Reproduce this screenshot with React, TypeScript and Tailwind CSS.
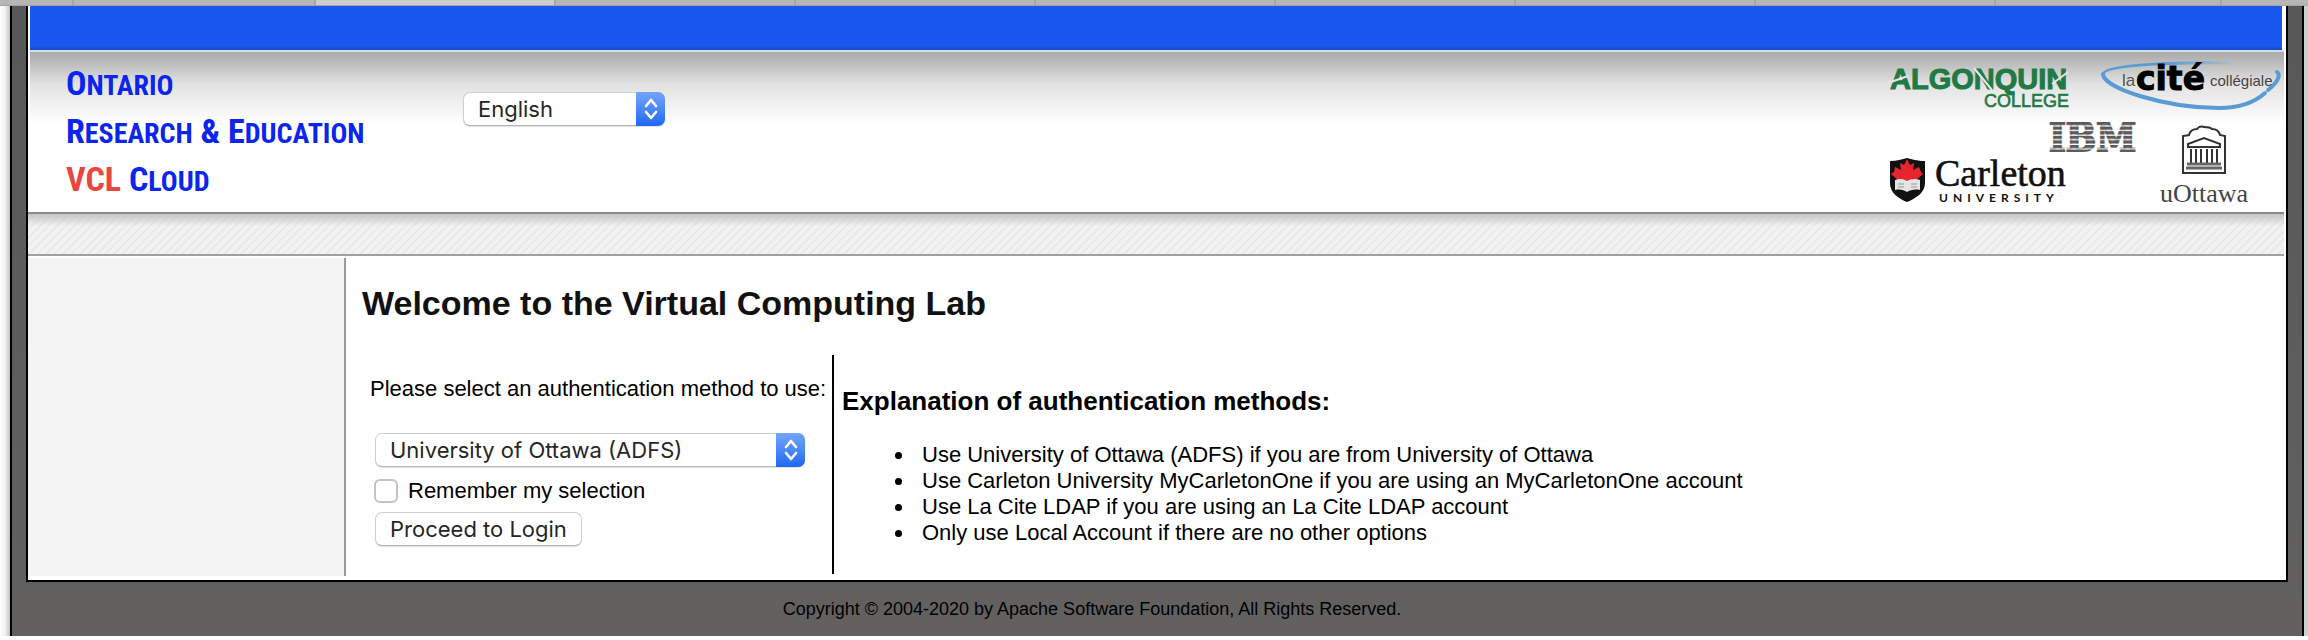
import React from "react";

const methods = [
    "Use University of Ottawa (ADFS) if you are from University of Ottawa",
    "Use Carleton University MyCarletonOne if you are using an MyCarletonOne account",
    "Use La Cite LDAP if you are using an La Cite LDAP account",
    "Only use Local Account if there are no other options",
];

const TabStrip: React.FC = () => (
    <div className="flex h-[6px] border-b border-[#a3a3a3] bg-[#b6b6b6]">
        <span className="flex-[73] border-r-2 border-[#a6a6a6]" />
        <span className="flex-[242] border-r-2 border-[#a6a6a6]" />
        <span className="flex-[240] border-r-2 border-[#a6a6a6] bg-[#cdcdcd]" />
        <span className="flex-[240] border-r-2 border-[#a6a6a6]" />
        <span className="flex-[240] border-r-2 border-[#a6a6a6]" />
        <span className="flex-[240] border-r-2 border-[#a6a6a6]" />
        <span className="flex-[240] border-r-2 border-[#a6a6a6]" />
        <span className="flex-[240] border-r-2 border-[#a6a6a6]" />
        <span className="flex-[240] border-r-2 border-[#a6a6a6]" />
        <span className="flex-[226] border-r-2 border-[#a6a6a6]" />
        <span className="flex-[87]" />
    </div>
);

type PickerProps = {
    id: string;
    label: string;
    options: string[];
    className: string;
};

const Picker: React.FC<PickerProps> = ({ id, label, options, className }) => (
    <div className={`relative ${className}`}>
        <select
            id={id}
            aria-label={label}
            className="block h-[34px] w-full appearance-none rounded-[7px] border border-[#cfcfcf] border-b-[#b4b4b4] bg-white pl-[14px] pr-9 font-[Inter,sans-serif] text-[22px] leading-[30px] text-[#262626] shadow-[0_1px_1px_rgba(0,0,0,0.12)]"
        >
            {options.map((o) => (
                <option key={o}>{o}</option>
            ))}
        </select>
        <span className="pointer-events-none absolute inset-y-0 right-0 flex w-[29px] items-center justify-center rounded-r-[7px] bg-linear-to-b from-[#73a5f7] to-[#1e68f6]">
            <svg width="14" height="22" viewBox="0 0 14 22" fill="none" stroke="#fff" strokeWidth="2.6" strokeLinecap="round" strokeLinejoin="round">
                <path d="M2 8 7 2l5 6M2 14l5 6 5-6" />
            </svg>
        </span>
    </div>
);

const PartnerLogos: React.FC = () => (
    <svg width="400" height="158" viewBox="0 0 400 158" role="img" aria-label="Partner institutions">
        <defs>
            <pattern id="bars" width="8" height="4.6" y="1" patternUnits="userSpaceOnUse">
                <rect width="8" height="3.2" fill="#5c5c5c" />
            </pattern>
            <linearGradient id="swoosh" x1="0" x2="1">
                <stop offset="0.5" stopColor="#5b9bd5" />
                <stop offset="1" stopColor="#5b9bd5" stopOpacity="0.1" />
            </linearGradient>
        </defs>

        {/* Algonquin College */}
        <g fill="#1f7a45" fontFamily="'Liberation Sans', sans-serif">
            <text x="6" y="37" fontSize="29" fontWeight="700" stroke="#1f7a45" strokeWidth="1">ALGONQUIN</text>
            <text x="100" y="55" fontSize="18" stroke="#1f7a45" strokeWidth="0.6">COLLEGE</text>
        </g>
        <path d="M4 31l20-7M90 16l18 22M168 32l16-12" stroke="#e6e6e6" strokeWidth="2" />

        {/* La Cite collegiale */}
        <g fill="none" stroke="#5b9bd5" strokeLinecap="round">
            <path d="M347 11C300 10 221 12 219 22" stroke="url(#swoosh)" strokeWidth="3" />
            <path d="M219 22c0 14 62 34 116 34 20 0 36-6 46-15" strokeWidth="4" />
            <path d="M384 38c10-8 13-15 9-18" strokeWidth="4" />
        </g>
        <g fontFamily="'Liberation Sans', sans-serif">
            <text x="238" y="34" fontSize="17" fill="#555">la</text>
            <text x="252" y="38" fontSize="33" fontWeight="700" fontFamily="'DejaVu Sans', sans-serif" stroke="#000" strokeWidth="1">cité</text>
            <text x="326" y="34" fontSize="15" fill="#444">collégiale</text>
        </g>

        {/* IBM */}
        <text x="165" y="99" fontSize="40" fontWeight="700" fontFamily="'DejaVu Serif Condensed', 'DejaVu Serif', serif" fill="url(#bars)" stroke="url(#bars)" strokeWidth="2">IBM</text>

        {/* Carleton University */}
        <path d="M6 109c7 0 12-2 17-3 5 1 10 3 18 3v22c0 9-8 15-18 19C13 146 6 140 6 131z" fill="#111" />
        <path d="M23 107l3 6 4-2-1 7 6-3 2 5 2 2-8 7H15l-8-7 3-2 1-5 6 3-1-7 4 2z" fill="#e8252f" />
        <path d="M11 128c5-2 9-1 12 1 3-2 8-3 13-1v10c-5-1-10 0-13 2-3-2-7-3-12-2z" fill="#e4e4e4" />
        <path d="M14 132h6M27 132h6M14 135h6M27 135h6" stroke="#999" />
        <g fill="#111">
            <text x="51" y="134" fontSize="38" fontFamily="'Liberation Serif', serif" stroke="#111" strokeWidth="0.6">Carleton</text>
            <text x="55" y="150" fontSize="12" fontWeight="700" fontFamily="Lato, sans-serif" className="tracking-[5px]">UNIVERSITY</text>
        </g>

        {/* uOttawa */}
        <g fill="none" stroke="#333" strokeWidth="2">
            <path d="M299 121V84l6-1c1-4 4-6 8-6 3-4 6-2 7-2 0 0 6 0 8 2 4 0 7 2 8 6l5 1v37z" />
            <path d="M304 92l16-6 16 6v3h-32z" />
            <path d="M307 97v14M312 97v14M317 97v14M323 97v14M328 97v14M333 97v14" />
            <path d="M303 112h34M302 116h36" strokeWidth="3" stroke="#666" />
        </g>
        <text x="276" y="150" fontSize="26" fontFamily="'Liberation Serif', serif" fill="#444">uOttawa</text>
    </svg>
);

const Header: React.FC = () => (
    <header className="pr-[2px]">
        <div className="ml-[2px] mr-[2px] h-11 bg-linear-to-b from-[#1a57f0] from-90% to-[#1b4bc4]" />
        <div className="ml-[2px] flex h-[162px] items-start justify-between border-t-2 border-[#d3dcf0] bg-linear-to-b from-[#a9a9a9] via-[#e2e2e2] via-20% to-white to-45%">
            <div className="flex items-start">
                <a
                    href="#"
                    className="ml-9 mt-[7px] block w-[360px] font-['Roboto_Condensed','Open_Sans_Condensed','Liberation_Sans_Narrow','Open_Sans',sans-serif] text-[34px] font-bold leading-[48px] text-[#0a25ee]"
                >
                    O<span className="text-[28px] leading-none">NTARIO</span>
                    <br />
                    R<span className="text-[28px] leading-none">ESEARCH</span> &amp; E
                    <span className="text-[28px] leading-none">DUCATION</span>
                    <br />
                    <span className="text-[#ea4540]">VCL</span> C<span className="text-[28px] leading-none">LOUD</span>
                </a>
                <Picker
                    id="language"
                    label="Language"
                    options={["English", "Français"]}
                    className="ml-[37px] mt-10 w-[202px]"
                />
            </div>
            <PartnerLogos />
        </div>
        <div className="h-11 border-y-2 border-t-[#8a8a8a] border-b-[#a0a0a0] bg-[linear-gradient(#c4c4c4,rgba(240,240,240,0)_12px),repeating-linear-gradient(135deg,#f2f2f2_0,#f2f2f2_4px,#e9e9e9_4px,#e9e9e9_6px)]" />
    </header>
);

const LoginForm: React.FC = () => (
    <form className="w-[470px] pl-2 pt-[19px]">
        <label htmlFor="authmethod" className="block whitespace-nowrap leading-[30px]">
            Please select an authentication method to use:
        </label>
        <Picker
            id="authmethod"
            label="Authentication method"
            options={["University of Ottawa (ADFS)", "Carleton University MyCarletonOne", "La Cite LDAP", "Local Account"]}
            className="ml-[5px] mt-[29px] w-[430px]"
        />
        <div className="mt-2 flex h-8 items-center gap-[10px] pl-1">
            <input
                id="remember"
                type="checkbox"
                className="size-6 appearance-none rounded-[6px] border-2 border-[#c3c3c3] bg-white checked:bg-[#1e68f6]"
            />
            <label htmlFor="remember">Remember my selection</label>
        </div>
        <button
            type="button"
            className="ml-[5px] mt-[5px] block h-[34px] rounded-[7px] border border-[#cfcfcf] border-b-[#b4b4b4] bg-white px-[14px] font-[Inter,sans-serif] text-[22px] leading-[30px] text-[#262626] shadow-[0_1px_1px_rgba(0,0,0,0.12)]"
        >
            Proceed to Login
        </button>
    </form>
);

const App: React.FC = () => {
    return (
        <div className="bg-white font-['Liberation_Sans',Arial,sans-serif] text-[22px] leading-[26px] text-black">
            <TabStrip />
            <div className="flex">
                <div className="w-[10px] bg-linear-to-r from-white via-[#f2f2f2] to-[#c4c4c4]" />
                <div className="flex-1 border-x-2 border-black bg-linear-to-b from-[#585858] to-[#626160] px-[14px]">
                    <div className="border-2 border-t-0 border-black bg-white">
                        <Header />
                        <div className="flex pb-1 pt-[2px]">
                            <aside className="w-[318px] border-r-2 border-[#999] bg-[#f4f4f4]" />
                            <main className="flex-1 pl-4">
                                <h1 className="pt-6 text-[34px] font-bold leading-[42px] text-[#111]">
                                    Welcome to the Virtual Computing Lab
                                </h1>
                                <div className="mt-[31px] flex pb-[2px]">
                                    <LoginForm />
                                    <section className="h-[219px] border-l-2 border-black pl-2">
                                        <h2 className="pt-[31px] text-[26px] font-bold leading-[30px]">
                                            Explanation of authentication methods:
                                        </h2>
                                        <ul className="mt-[26px] list-disc pl-[73px]">
                                            {methods.map((m) => (
                                                <li key={m} className="pl-[7px]">
                                                    {m}
                                                </li>
                                            ))}
                                        </ul>
                                    </section>
                                </div>
                            </main>
                        </div>
                    </div>
                    <footer className="pb-[14px] pr-[130px] pt-[14px] text-center text-[18px]">
                        Copyright © 2004-2020 by Apache Software Foundation, All Rights Reserved.
                    </footer>
                </div>
                <div className="w-1 bg-[#cfcfcf]" />
            </div>
        </div>
    );
};

export default App;
